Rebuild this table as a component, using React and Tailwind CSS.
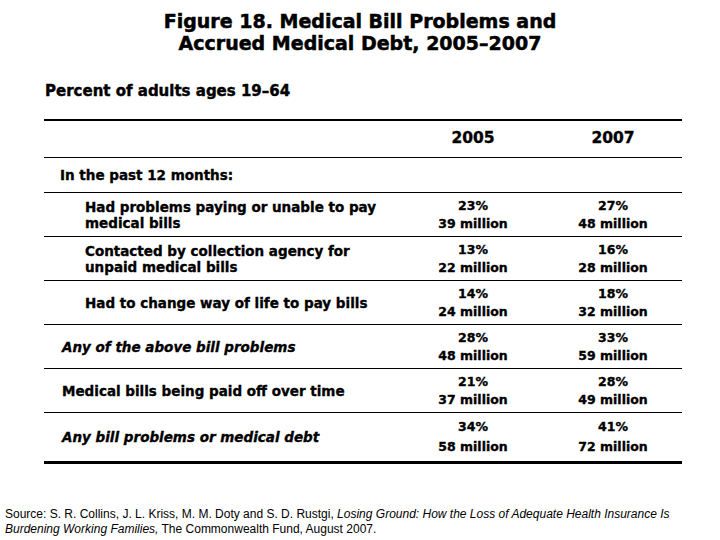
import React from "react";

const rows = [
  { label: ["Had problems paying or unable to pay", "medical bills"], indent: true, a: ["23%", "39 million"], b: ["27%", "48 million"] },
  { label: ["Contacted by collection agency for", "unpaid medical bills"], indent: true, a: ["13%", "22 million"], b: ["16%", "28 million"] },
  { label: ["Had to change way of life to pay bills"], indent: true, a: ["14%", "24 million"], b: ["18%", "32 million"] },
  { label: ["Any of the above bill problems"], italic: true, a: ["28%", "48 million"], b: ["33%", "59 million"] },
  { label: ["Medical bills being paid off over time"], a: ["21%", "37 million"], b: ["28%", "49 million"] },
  { label: ["Any bill problems or medical debt"], italic: true, a: ["34%", "58 million"], b: ["41%", "72 million"], last: true },
];

function Val({ v, tall }) {
  return (
    <div className={(tall ? "leading-[20px] " : "leading-[18px] ") + "flex flex-col items-center justify-center text-[12.5px]"}>
      <span>{v[0]}</span>
      <span>{v[1]}</span>
    </div>
  );
}

export default function App() {
  return (
    <div className="w-[720px] h-[540px] bg-white text-black font-['DejaVu_Sans',sans-serif] overflow-hidden">
      <div className="pt-[10px] text-center text-[19px] font-bold leading-[22px] [-webkit-text-stroke:0.5px_black]">
        <div>Figure 18. Medical Bill Problems and</div>
        <div>Accrued Medical Debt, 2005–2007</div>
      </div>
      <div className="mt-[29px] pl-[45px] text-[15px] font-bold leading-[16px] [-webkit-text-stroke:0.4px_black]">
        Percent of adults ages 19–64
      </div>
      <div className="ml-[44px] w-[638px] mt-[20px] border-t-2 border-black font-bold [-webkit-text-stroke:0.35px_black]">
        <div className="grid grid-cols-[358px_142px_138px] h-[37px] border-b border-black items-center">
          <div></div>
          <div className="text-center text-[15.5px]">2005</div>
          <div className="text-center text-[15.5px]">2007</div>
        </div>
        <div className="h-[35px] border-b border-black flex items-center pl-[16px] text-[13.5px]">
          In the past 12 months:
        </div>
        {rows.map((r, i) => (
          <div
            key={i}
            className={
              r.last
                ? "grid grid-cols-[358px_142px_138px] h-[51px] border-b-[3px] border-black items-center"
                : "grid grid-cols-[358px_142px_138px] h-[44px] border-b border-black items-center"
            }
          >
            <div
              className={
                (r.indent ? "pl-[41px] " : "pl-[18px] ") +
                (r.italic ? "italic " : "") +
                "leading-[16px] flex flex-col text-[13.5px]"
              }
            >
              {r.label.map((l, j) => (
                <span key={j}>{l}</span>
              ))}
            </div>
            <Val v={r.a} tall={r.last} />
            <Val v={r.b} tall={r.last} />
          </div>
        ))}
      </div>
      <div className="mt-[43px] pl-[5px] text-[12px] leading-[15px] font-['Liberation_Sans',sans-serif] whitespace-nowrap">
        <div>
          Source: S. R. Collins, J. L. Kriss, M. M. Doty and S. D. Rustgi,{" "}
          <i>Losing Ground: How the Loss of Adequate Health Insurance Is</i>
        </div>
        <div>
          <i>Burdening Working Families,</i> The Commonwealth Fund, August 2007.
        </div>
      </div>
    </div>
  );
}
